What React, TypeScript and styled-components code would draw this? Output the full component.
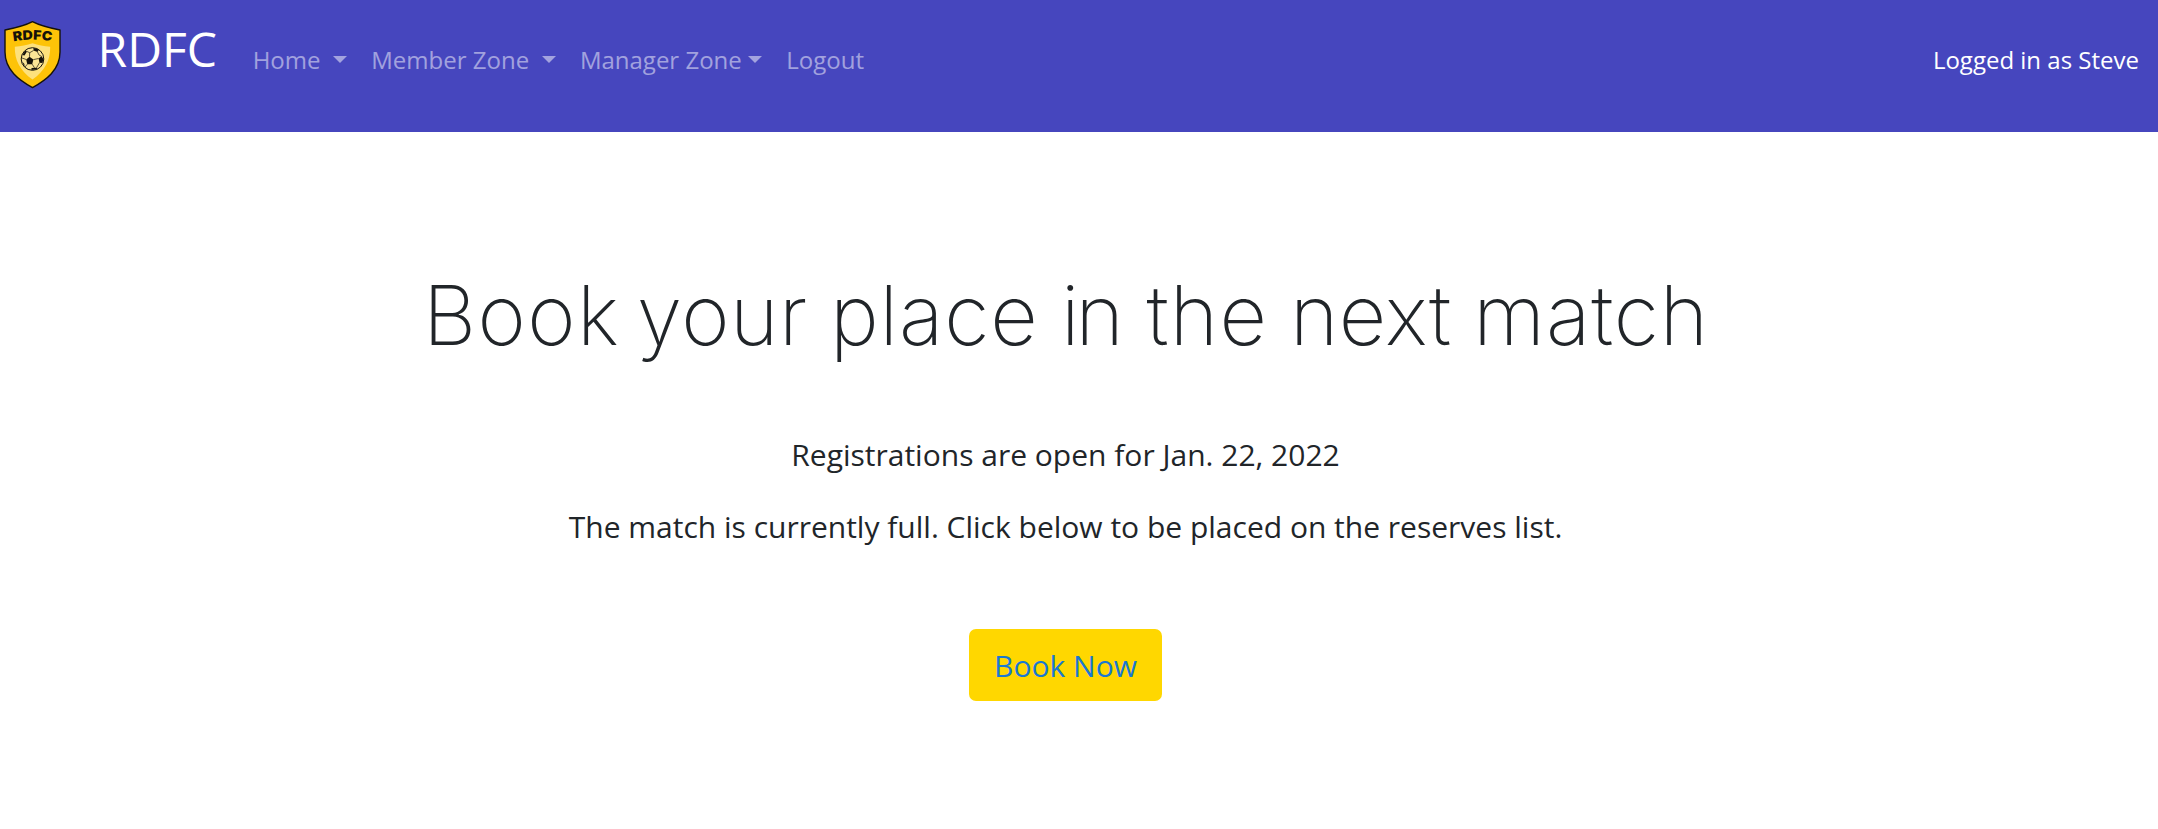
import React from "react";
import styled, { createGlobalStyle } from "styled-components";

const GlobalStyle = createGlobalStyle`
  *, *::before, *::after { box-sizing: border-box; }
  body {
    margin: 0;
    background: #fff;
    color: #212529;
    font-family: "Open Sans", "Noto Sans", sans-serif;
    font-size: 30px;
    line-height: 1.5;
    overflow: hidden;
  }
`;

const Navbar = styled.nav`
  display: flex;
  align-items: flex-start;
  height: 132px;
  padding: 13px 19px 0 0;
  background: #4646be;
`;

const Crest = styled.svg`
  flex: none;
  width: 60px;
  height: 70px;
  margin: 7px 34.5px 0 3px;
`;

const Brand = styled.a`
  margin-right: 23.5px;
  color: #fff;
  font-size: 48px;
  line-height: 72px;
`;

const NavList = styled.ul`
  display: flex;
  flex: 1;
  margin: 29px 0 0;
  padding: 0;
  list-style: none;
`;

const NavLink = styled.a<{ $spaced?: boolean }>`
  display: flex;
  align-items: center;
  padding: 0 12.2px;
  color: rgba(255, 255, 255, 0.5);
  font-size: 24px;
  line-height: 36px;
  white-space: nowrap;
  gap: ${(p) => (p.$spaced ? 12.4 : 6.1)}px;
`;

const Caret = styled.span`
  margin-top: -1px;
  border-top: 7.2px solid;
  border-left: 7.2px solid transparent;
  border-right: 7.2px solid transparent;
`;

const LoginStatus = styled.span`
  margin-top: 29px;
  color: #fff;
  font-size: 24px;
  line-height: 36px;
`;

const Content = styled.main`
  display: flex;
  flex-direction: column;
  align-items: center;
  width: 2131px;
  padding-top: 133px;
  text-align: center;
`;

const Title = styled.h1`
  display: flex;
  margin: 0 0 67px 1px;
  font-family: Inter, "Open Sans", sans-serif;
  font-size: 82.5px;
  font-weight: 150;
  line-height: 100px;
`;

const Word = styled.span<{ $tracking: number; $space: number }>`
  margin-right: ${(p) => p.$space}px;
  letter-spacing: ${(p) => p.$tracking}px;
`;

const Text = styled.p`
  margin: 0 0 27px;
`;

const BookButton = styled.button`
  width: 193px;
  height: 72px;
  margin-top: 53px;
  padding: 0;
  border: 0;
  border-radius: 7px;
  background: #ffd700;
  color: #1a78d2;
  font: inherit;
`;

const links = [
  { label: "Home", menu: true, spaced: true },
  { label: "Member Zone", menu: true, spaced: true },
  { label: "Manager Zone", menu: true, spaced: false },
  { label: "Logout", menu: false, spaced: false },
];

const titleWords: [string, number, number][] = [
  ["Book", 1.4, 16.5],
  ["your", 0.6, 22],
  ["place", 0.9, 22.3],
  ["in", -4, 26.5],
  ["the", 1.2, 22],
  ["next", 0.4, 21.8],
  ["match", 0.9, 0],
];

const ClubCrest = () => (
  <Crest viewBox="3 20 60 70" aria-label="RDFC crest">
    <path
      d="M32.5 21.6 C25 25.6 15 28 5 30 V52 C5 70 19 80 32.5 87.6 C46 80 60 70 60 52 V30 C50 28 40 25.6 32.5 21.6Z"
      fill="#fdc308"
      stroke="#15120a"
      strokeWidth="1.4"
      strokeLinejoin="round"
    />
    <path
      d="M32.5 43.2 C27 45 21 46 14.8 46.8 C14.5 60 20 71 32.5 79.5 C45 71 50.5 60 50.2 46.8 C44 46 38 45 32.5 43.2Z"
      fill="#fde17c"
    />
    <path id="crest-arc" d="M13.4 41.4 Q32.5 37.8 52.4 41.4" fill="none" />
    <text fontFamily="Inter, sans-serif" fontWeight="900" fontSize="13" fill="#15120a">
      <textPath href="#crest-arc" textLength="38.5" lengthAdjust="spacingAndGlyphs">RDFC</textPath>
    </text>
    <circle cx="32.5" cy="59" r="11.3" fill="#fbe596" stroke="#15120a" strokeWidth="1" />
    <g fill="#15120a">
      <path d="M29.5 56.8 L33.4 59.6 L32.2 64.2 L27.3 64.2 L26.2 59.5Z" />
      <path d="M33.5 48 L39 49.5 L37.5 52 L33.5 50.5Z" />
      <path d="M22.2 55 L25.5 50.6 L27 51.5 L24.5 55.5Z" />
      <path d="M38.6 58.5 L41.5 56.3 L43.5 59 L42.4 63 L39.5 62.7Z" />
      <path d="M22 61.5 L24.4 64 L24.5 67Z" />
      <path d="M31.5 68 L36.5 67.8 L37.5 69 L31.5 70Z" />
    </g>
    <path
      d="M29.5 56.8 L29.7 52.7 L33.5 50.5 M37.5 52 L39 55 L41.5 56.3 M33.4 59.6 L38.6 58.5 M32.2 64.2 L34.5 67.8 M39.5 62.7 L36.5 67.8 M26.2 59.5 L22 58 M27.3 64.2 L25 67 M27 51.5 L29.7 52.7"
      fill="none"
      stroke="#15120a"
      strokeWidth=".7"
    />
  </Crest>
);

export default function App() {
  return (
    <>
      <GlobalStyle />
      <Navbar>
        <ClubCrest />
        <Brand>RDFC</Brand>
        <NavList>
          {links.map((l) => (
            <li key={l.label}>
              <NavLink $spaced={l.spaced}>
                {l.label}
                {l.menu && <Caret />}
              </NavLink>
            </li>
          ))}
        </NavList>
        <LoginStatus>Logged in as Steve</LoginStatus>
      </Navbar>
      <Content>
        <Title>
          {titleWords.map(([word, tracking, space]) => (
            <Word key={word} $tracking={tracking} $space={space}>
              {word}{" "}
            </Word>
          ))}
        </Title>
        <Text>Registrations are open for Jan. 22, 2022</Text>
        <Text>The match is currently full. Click below to be placed on the reserves list.</Text>
        <BookButton>Book Now</BookButton>
      </Content>
    </>
  );
}
